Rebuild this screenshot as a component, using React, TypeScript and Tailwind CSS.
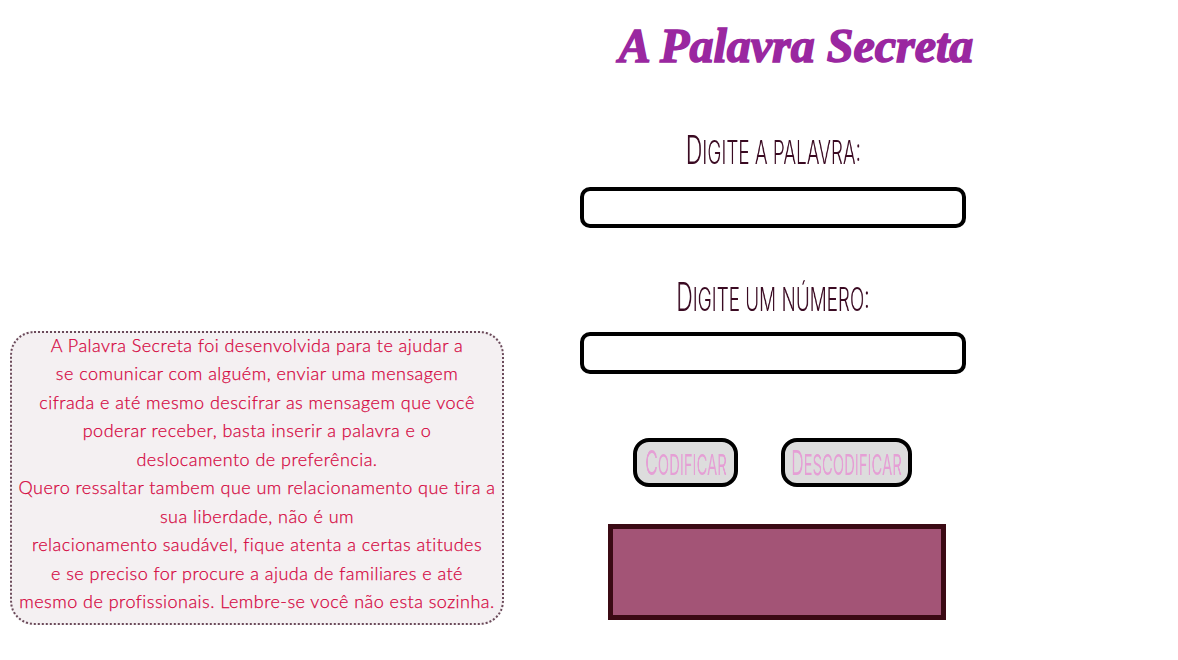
const lines = [
  "A Palavra Secreta foi desenvolvida para te ajudar a",
  "se comunicar com alguém, enviar uma mensagem",
  "cifrada e até mesmo descifrar as mensagem que você",
  "poderar receber, basta inserir a palavra e o",
  "deslocamento de preferência.",
  "Quero ressaltar tambem que um relacionamento que tira a",
  "sua liberdade, não é um",
  "relacionamento saudável, fique atenta a certas atitudes",
  "e se preciso for procure a ajuda de familiares e até",
  "mesmo de profissionais. Lembre-se você não esta sozinha.",
];

const labelClass =
  "block text-center whitespace-nowrap uppercase text-[#3a0a22] text-[32px] first-letter:text-[39px] leading-[44px] font-['Inter',sans-serif] font-light scale-x-[0.59] [will-change:transform]";

const buttonClass =
  "flex h-[49px] items-center justify-center border-[4px] border-black rounded-[16px] bg-[#dddddd] text-[#e59fd5] text-[29px] leading-none font-['Inter',sans-serif] font-normal";

const buttonTextClass =
  "inline-block shrink-0 whitespace-nowrap uppercase first-letter:text-[34px] scale-x-[0.51] [will-change:transform]";

export default function App() {
  return (
    <div className="flex h-[660px] w-[1178px] bg-white overflow-hidden">
      {/* Sobre */}
      <div className="flex w-[580px] items-end pl-[10px] pb-[35px]">
        <div className="flex h-[294px] w-[494px] flex-col items-center rounded-[24px] border-2 border-dotted border-[#6b4a5a] bg-[#f4f0f2] text-[#d4063f] font-['Lato',sans-serif] font-light text-[18px] leading-[28.44px] tracking-[0.47px] [-webkit-text-stroke:0.25px_#d4063f]">
          <div className="-mt-[2px] text-center">
            {lines.map((line) => (
              <div key={line} className="whitespace-nowrap">
                {line}
              </div>
            ))}
          </div>
        </div>
      </div>

      {/* Formulario */}
      <div className="flex w-[386px] flex-col items-center">
        <h1 className="mt-[16px] ml-[46px] whitespace-nowrap text-[#9a27a0] text-[48px] leading-[60px] font-bold italic font-['Liberation_Serif',serif] [-webkit-text-stroke:1.5px_#9a27a0]">
          A Palavra Secreta
        </h1>
        <label className={`${labelClass} mt-[52px]`}>Digite a palavra:</label>
        <input className="mt-[12px] h-[41px] w-[386px] rounded-[10px] border-[4px] border-black bg-white" />
        <label className={`${labelClass} mt-[47px]`}>Digite um número:</label>
        <input className="mt-[10px] h-[42px] w-[386px] rounded-[10px] border-[4px] border-black bg-white" />
        <div className="mt-[64px] flex gap-[43px] -ml-px">
          <button className={`${buttonClass} w-[105px]`}>
            <span className={buttonTextClass}>Codificar</span>
          </button>
          <button className={`${buttonClass} w-[131px]`}>
            <span className={buttonTextClass}>Descodificar</span>
          </button>
        </div>
        <div className="mt-[37px] ml-[8px] h-[96px] w-[338px] border-[5px] border-[#3b0a14] bg-[#a35476]" />
      </div>
    </div>
  );
}
